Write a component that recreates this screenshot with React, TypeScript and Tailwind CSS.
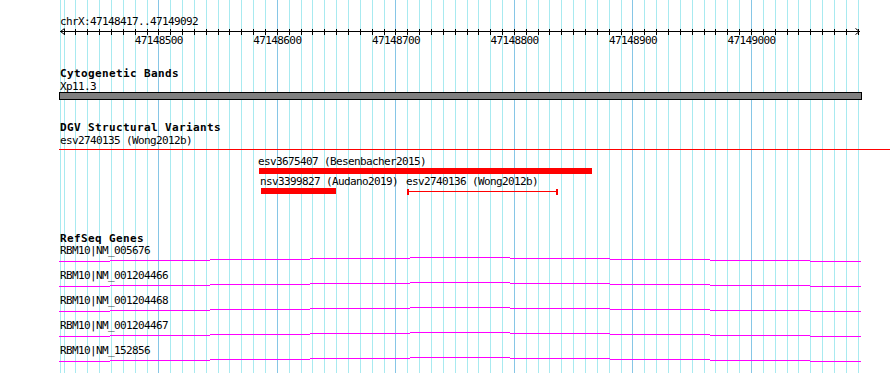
import React from "react";

const START = 47148417;
const END = 47149092;
const SCALE = 800 / (END - START);
const xOf = (bp: number) => 60 + (bp - START) * SCALE;

const gridLines: { x: number; major: boolean }[] = [];
for (let bp = 47148420; bp <= 47149090; bp += 10) {
  gridLines.push({ x: Math.round(xOf(bp)), major: bp % 100 === 0 });
}

const majorLabels = [47148500, 47148600, 47148700, 47148800, 47148900, 47149000];

const genes = [
  "RBM10|NM_005676",
  "RBM10|NM_001204466",
  "RBM10|NM_001204468",
  "RBM10|NM_001204467",
  "RBM10|NM_152856",
];

// wavy gene line segments: [x1, x2, dy]
const geneSegs: [number, number, number][] = [
  [59, 110, 0],
  [110, 210, -1],
  [210, 310, -2],
  [310, 410, -3],
  [410, 510, -4],
  [510, 610, -3],
  [610, 710, -2],
  [710, 810, -1],
  [810, 861, 0],
];

const txt = "font-['DejaVu_Sans_Mono',monospace] text-[11px] leading-[13px] tracking-[-0.62px] text-black whitespace-pre";
const bold = "font-['DejaVu_Sans_Mono',monospace] text-[11px] leading-[13px] tracking-[0.38px] font-bold text-black whitespace-pre";

function Grid() {
  return (
    <svg className="absolute inset-0" width={890} height={373}>
      <line x1={60.5} y1={0} x2={60.5} y2={373} stroke="#a8eaf0" strokeWidth={1} />
      {gridLines.map((g) => (
        <line
          key={g.x}
          x1={g.x + 0.5}
          y1={0}
          x2={g.x + 0.5}
          y2={373}
          stroke={g.major ? "#86c6e6" : "#a8eaf0"}
          strokeWidth={1}
        />
      ))}
    </svg>
  );
}

function Ruler() {
  return (
    <svg className="block" width={890} height={8}>
      <line x1={60} y1={3.5} x2={860} y2={3.5} stroke="#000" strokeWidth={1} />
      {gridLines.map((g) => (
        <line key={g.x} x1={g.x + 0.5} y1={1} x2={g.x + 0.5} y2={7} stroke="#000" strokeWidth={1} />
      ))}
      <polyline points="64.5,0.5 60.5,3.5 64.5,6.5" fill="none" stroke="#000" strokeWidth={1} />
      <polyline points="855.5,0.5 859.5,3.5 855.5,6.5" fill="none" stroke="#000" strokeWidth={1} />
    </svg>
  );
}

function GeneRow({ label }: { label: string }) {
  return (
    <div className="relative h-[25px]">
      <svg className="absolute left-0 top-0" width={890} height={25}>
        {geneSegs.map(([a, b, dy], i) => (
          <line key={i} x1={a} y1={17.5 + dy} x2={b} y2={17.5 + dy} stroke="#ff00ff" strokeWidth={1} />
        ))}
      </svg>
      <div className={`relative pl-[60px] ${txt}`}>{label}</div>
    </div>
  );
}

export default function App() {
  return (
    <div className="relative w-[890px] h-[373px] bg-white overflow-hidden">
      <Grid />
      <div className="relative flex flex-col pt-[15px]">
        {/* ruler */}
        <div className={`pl-[60px] h-[13px] ${txt}`}>chrX:47148417..47149092</div>
        <Ruler />
        <div className="relative h-[13px] -mt-[2px]">
          {majorLabels.map((bp) => (
            <div
              key={bp}
              className={`absolute top-0 -translate-x-1/2 ${txt}`}
              style={{ left: xOf(bp) + 0.5 }}
            >
              {bp}
            </div>
          ))}
        </div>

        {/* cytogenetic bands */}
        <div className={`mt-[20px] pl-[60px] h-[13px] ${bold}`}>Cytogenetic Bands</div>
        <div className={`pl-[60px] h-[12px] ${txt}`}>Xp11.3</div>
        <div className="ml-[59px] w-[803px] h-[8px] border border-black bg-[#808080]" />

        {/* DGV */}
        <div className={`mt-[21px] pl-[60px] h-[13px] ${bold}`}>DGV Structural Variants</div>
        <div className={`pl-[60px] h-[15px] ${txt}`}>esv2740135 (Wong2012b)</div>
        <div className="ml-[59px] w-[831px] h-px bg-[#ff0000]" />
        <div className="relative h-[82px]">
          <div className={`absolute top-[5px] left-[258px] ${txt}`}>esv3675407 (Besenbacher2015)</div>
          <div className="absolute top-[18px] left-[259px] w-[333px] h-[6px] bg-[#ff0000]" />
          <div className={`absolute top-[25px] left-[260px] ${txt}`}>nsv3399827 (Audano2019)</div>
          <div className="absolute top-[38px] left-[261px] w-[75px] h-[6px] bg-[#ff0000]" />
          <div className={`absolute top-[25px] left-[406px] ${txt}`}>esv2740136 (Wong2012b)</div>
          <svg className="absolute left-[406px] top-[38px]" width={154} height={8}>
            <rect x={1} y={1} width={2} height={6} fill="#ff0000" />
            <rect x={150} y={1} width={2} height={6} fill="#ff0000" />
            <line x1={1} y1={3.5} x2={152} y2={3.5} stroke="#ff0000" strokeWidth={1} />
          </svg>
        </div>

        {/* RefSeq */}
        <div className={`pl-[60px] h-[12px] ${bold}`}>RefSeq Genes</div>
        {genes.map((g) => (
          <GeneRow key={g} label={g} />
        ))}
      </div>
    </div>
  );
}
